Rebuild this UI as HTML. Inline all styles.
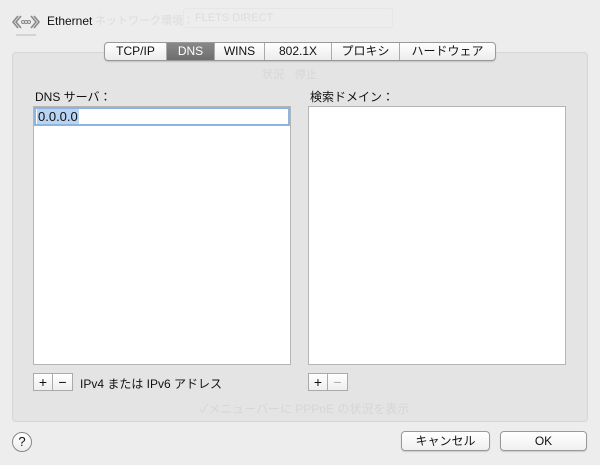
<!DOCTYPE html>
<html><head><meta charset="utf-8"><style>
*{margin:0;padding:0;box-sizing:border-box}
body{width:600px;height:465px;background:#ededed;font-family:"Liberation Sans","Noto Sans CJK JP",sans-serif;font-size:12px;color:#111;position:relative;overflow:hidden}
.a{position:absolute}
.ghost{color:#dcdcdc;font-size:11px}
.panel{left:12px;top:52px;width:576px;height:370px;background:#e4e4e4;border:1px solid #d6d6d6;border-radius:4px}
.tabs{left:104px;top:42px;height:19px;display:flex;border:1px solid #999;border-radius:4px;background:linear-gradient(#fff,#ececec);overflow:hidden;box-shadow:0 1px 1px rgba(0,0,0,.15)}
.tabs div{height:17px;line-height:17px;text-align:center;border-left:1px solid #aaa;font-size:12px;color:#111}
.tabs div:first-child{border-left:none}
.tabs .on{background:linear-gradient(#888,#6e6e6e);color:#fff}
.list{background:#fff;border:1px solid #b5b5b5}
.btn{border:1px solid #aaa;background:linear-gradient(#fff,#efefef);text-align:center;font-size:14px;line-height:16px}
.pb{border-radius:4px;border:1px solid #999;background:linear-gradient(#fff,#f0f0f0);text-align:center;font-size:12px;line-height:18px;box-shadow:0 1px 1px rgba(0,0,0,.15)}
</style></head><body>
<div class="a ghost" style="left:95px;top:12px">ネットワーク環境：</div>
<div class="a" style="left:183px;top:8px;width:210px;height:20px;border:1px solid #e6e6e6;border-radius:3px"></div>
<div class="a ghost" style="left:195px;top:12px">FLETS DIRECT</div>
<svg class="a" style="left:10px;top:8px" width="32" height="30" viewBox="0 0 32 30">
<path d="M8 8 L3 14 L8 20 M11 8 L6 14 L11 20 M24 8 L29 14 L24 20 M21 8 L26 14 L21 20" stroke="#8a8a8a" stroke-width="1.6" fill="none"/>
<circle cx="13" cy="14" r="1.5" fill="none" stroke="#888"/><circle cx="16" cy="14" r="1.5" fill="none" stroke="#888"/><circle cx="19" cy="14" r="1.5" fill="none" stroke="#888"/>
<line x1="6" y1="27" x2="26" y2="27" stroke="#bbb" stroke-width="1"/>
</svg>
<div class="a" style="left:47px;top:14px;font-size:12px">Ethernet</div>
<div class="a panel"></div>
<div class="a ghost" style="left:262px;top:66px;color:#d6d6d6">状況　停止</div>
<div class="a ghost" style="left:200px;top:400px;font-size:12px;color:#d6d6d6">✓メニューバーに PPPoE の状況を表示</div>
<div class="a tabs">
<div style="width:61px">TCP/IP</div><div class="on" style="width:48px">DNS</div><div style="width:50px">WINS</div><div style="width:67px">802.1X</div><div style="width:68px">プロキシ</div><div style="width:96px">ハードウェア</div>
</div>
<div class="a" style="left:35px;top:88px">DNS サーバ：</div>
<div class="a" style="left:310px;top:88px">検索ドメイン：</div>
<div class="a list" style="left:33px;top:106px;width:258px;height:259px"></div>
<div class="a" style="left:34px;top:107px;width:256px;height:19px;border:2px solid #8fb4e0;background:#fff"></div>
<div class="a" style="left:37px;top:109px;height:15px;padding:0 1px;background:#b9d3f3;font-size:13px;line-height:15px">0.0.0.0</div>
<div class="a list" style="left:308px;top:106px;width:258px;height:259px"></div>
<div class="a btn" style="left:33px;top:373px;width:20px;height:18px">+</div>
<div class="a btn" style="left:52px;top:373px;width:21px;height:18px">−</div>
<div class="a" style="left:80px;top:375px">IPv4 または IPv6 アドレス</div>
<div class="a btn" style="left:308px;top:373px;width:20px;height:18px">+</div>
<div class="a btn" style="left:327px;top:373px;width:21px;height:18px;color:#aaa">−</div>
<div class="a" style="left:12px;top:432px;width:20px;height:20px;border-radius:50%;border:1px solid #888;background:linear-gradient(#fff,#eee);text-align:center;line-height:18px;font-size:13px">?</div>
<div class="a pb" style="left:401px;top:431px;width:89px;height:20px">キャンセル</div>
<div class="a pb" style="left:500px;top:431px;width:87px;height:20px">OK</div>
</body></html>
